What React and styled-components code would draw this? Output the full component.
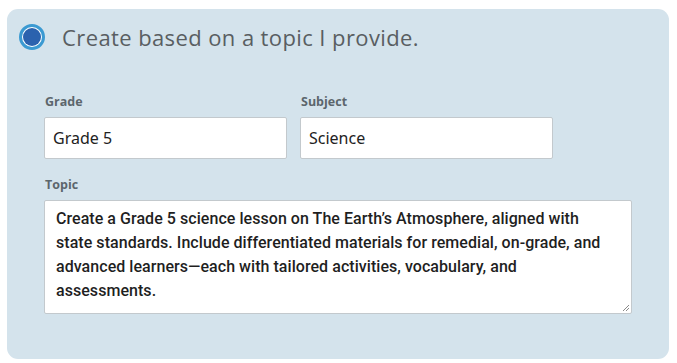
import React from "react";
import styled, { createGlobalStyle } from "styled-components";

const Global = createGlobalStyle`
  html, body { margin: 0; padding: 0; background: #ffffff; }
  body { font-family: "Open Sans", Arial, sans-serif; }
`;

const Page = styled.div`
  padding: 9px 8px 4px 7px;
`;

const Card = styled.section`
  width: 662px;
  height: 350px;
  box-sizing: border-box;
  background: #d4e3ec;
  border-radius: 11px;
  padding: 14px 37px 0 12px;
`;

const Header = styled.label`
  display: flex;
  align-items: center;
  gap: 17px;
  height: 28px;
`;

const Radio = styled.span`
  width: 26px;
  height: 26px;
  box-sizing: border-box;
  border-radius: 50%;
  border: 3px solid #3b9ad2;
  padding: 1px;
  background: #ffffff;
  display: flex;
  flex-shrink: 0;
  &::after {
    content: "";
    flex: 1;
    border-radius: 50%;
    background: #2b62ae;
  }
`;

const Title = styled.span`
  font-family: "Open Sans", Arial, sans-serif;
  font-size: 22px;
  color: #595e62;
  letter-spacing: 0.4px;
  margin-top: -1px;
`;

const Form = styled.div`
  padding: 44px 0 0 25px;
  display: flex;
  flex-direction: column;
  gap: 19px;
`;

const Row = styled.div`
  display: flex;
  gap: 13px;
`;

const Field = styled.div`
  display: flex;
  flex-direction: column;
  gap: 9px;
  width: ${(p) => p.$w || "auto"};
  flex: ${(p) => (p.$w ? "none" : "1")};
`;

const Label = styled.div`
  font-family: "Open Sans", Arial, sans-serif;
  font-weight: 700;
  font-size: 12.5px;
  color: #5c666c;
  padding-left: 1px;
  line-height: 13px;
`;

const Input = styled.div`
  height: 42px;
  box-sizing: border-box;
  background: #ffffff;
  border: 1px solid #c3c9cd;
  border-radius: 2px;
  padding: 0 8px;
  display: flex;
  align-items: center;
  font-family: "Noto Sans", Arial, sans-serif;
  font-size: 16px;
  color: #222;
`;

const TextArea = styled.div`
  position: relative;
  height: 114px;
  box-sizing: border-box;
  background: #ffffff;
  border: 1px solid #c3c9cd;
  border-radius: 2px;
  padding: 6px 30px 6px 11px;
  font-family: Roboto, Arial, sans-serif;
  font-weight: 500;
  font-size: 16px;
  line-height: 24px;
  letter-spacing: 0.05px;
  color: #1f1f1f;
`;

const Grip = styled.svg`
  position: absolute;
  right: 1px;
  bottom: 1px;
`;

export default function App() {
  return (
    <>
      <Global />
      <Page>
        <Card>
          <Header>
            <Radio />
            <Title>Create based on a topic I provide.</Title>
          </Header>
          <Form>
            <Row>
              <Field $w="243px">
                <Label>Grade</Label>
                <Input>Grade 5</Input>
              </Field>
              <Field $w="253px">
                <Label>Subject</Label>
                <Input>Science</Input>
              </Field>
            </Row>
            <Field>
              <Label>Topic</Label>
              <TextArea>
                Create a Grade 5 science lesson on The Earth’s Atmosphere, aligned with state standards. Include differentiated materials for remedial, on-grade, and advanced learners—each with tailored activities, vocabulary, and assessments.
                <Grip width="9" height="9" viewBox="0 0 9 9">
                  <path d="M8 2 L2 8 M8 5 L5 8" stroke="#8a8a8a" strokeWidth="1" />
                </Grip>
              </TextArea>
            </Field>
          </Form>
        </Card>
      </Page>
    </>
  );
}
